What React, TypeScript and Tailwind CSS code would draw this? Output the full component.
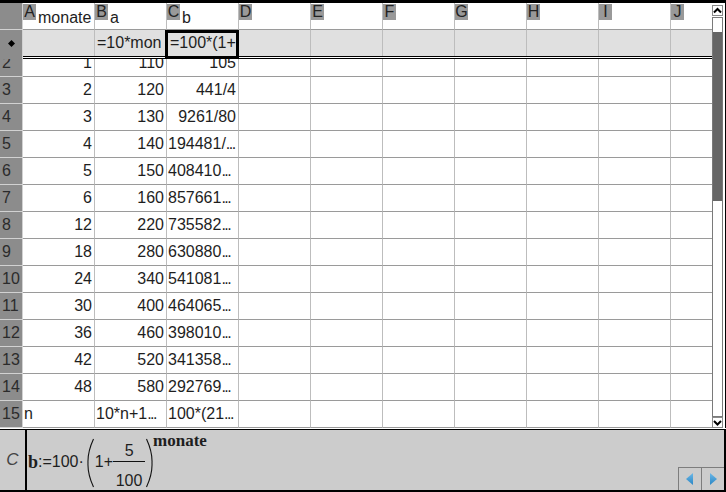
import React from 'react';

type Align = 'right' | 'left';

const ROWS: [string, string, string, string][] = [
  ['2', '1', '110', '105'],
  ['3', '2', '120', '441/4'],
  ['4', '3', '130', '9261/80'],
  ['5', '4', '140', '194481/...'],
  ['6', '5', '150', '408410...'],
  ['7', '6', '160', '857661...'],
  ['8', '12', '220', '735582...'],
  ['9', '18', '280', '630880...'],
  ['10', '24', '340', '541081...'],
  ['11', '30', '400', '464065...'],
  ['12', '36', '460', '398010...'],
  ['13', '42', '520', '341358...'],
  ['14', '48', '580', '292769...'],
  ['15', 'n', '10*n+1...', '100*(21...'],
];

const LETTERS = ['A', 'B', 'C', 'D', 'E', 'F', 'G', 'H', 'I', 'J'];
const NAMES = ['monate', 'a', 'b', '', '', '', '', '', '', ''];

function Val({ s }: { s: string }) {
  if (s.endsWith('...')) {
    return (
      <>
        {s.slice(0, -3)}
        <span className="tracking-[-1.5px]">...</span>
      </>
    );
  }
  return <>{s}</>;
}

function Cell({
  col,
  align = 'right',
  children,
  extra = '',
}: {
  col: number;
  align?: Align;
  children?: React.ReactNode;
  extra?: string;
}) {
  const w = col === 9 ? 'w-[41px]' : 'w-[72px] border-r border-[#bdbdbd]';
  const al = align === 'right' ? 'justify-end pr-[2px]' : 'justify-start pl-[1px]';
  return (
    <div className={`${w} ${al} ${extra} h-full shrink-0 flex items-center overflow-hidden whitespace-nowrap`}>
      {children}
    </div>
  );
}

function DataRow({ r }: { r: [string, string, string, string] }) {
  const [n, a, b, c] = r;
  const alignOf = (s: string): Align => (s.endsWith('...') || s === 'n' ? 'left' : 'right');
  return (
    <div className="h-[27px] flex shrink-0">
      <div className="w-[23px] shrink-0 h-full bg-[#8c8c8c] border-r border-b border-[#d2d2d2] text-[#2b2b2b] flex items-center pl-[2px]">
        {n}
      </div>
      <Cell col={0} align={alignOf(a)} extra="border-b border-b-[#9a9a9a]">
        <Val s={a} />
      </Cell>
      <Cell col={1} align={alignOf(b)} extra="border-b border-b-[#9a9a9a]">
        <Val s={b} />
      </Cell>
      <Cell col={2} align={alignOf(c)} extra="border-b border-b-[#9a9a9a]">
        <Val s={c} />
      </Cell>
      {[3, 4, 5, 6, 7, 8, 9].map((i) => (
        <Cell key={i} col={i} extra="border-b border-b-[#9a9a9a]" />
      ))}
    </div>
  );
}

function Chevron({ down = false }: { down?: boolean }) {
  return (
    <svg width="9" height="9" viewBox="0 0 9 9">
      {down ? (
        <polyline points="1,3 4.5,6.5 8,3" fill="none" stroke="#000" strokeWidth="2" />
      ) : (
        <polyline points="1,6.5 4.5,3 8,6.5" fill="none" stroke="#000" strokeWidth="2" />
      )}
    </svg>
  );
}

function Paren({ right = false }: { right?: boolean }) {
  return (
    <svg width="8" height="50" viewBox="0 0 8 50" className="shrink-0">
      {right ? (
        <path d="M1.5 1 Q7.5 14 7 25 Q7.5 36 1.5 49" fill="none" stroke="#111" strokeWidth="1.1" />
      ) : (
        <path d="M6.5 1 Q0.5 14 1 25 Q0.5 36 6.5 49" fill="none" stroke="#111" strokeWidth="1.1" />
      )}
    </svg>
  );
}

export default function App() {
  return (
    <div className="w-[726px] h-[492px] bg-white flex flex-col overflow-hidden font-['Liberation_Sans',Arial,sans-serif] text-[16px] leading-[16px] text-[#1e1e1e]">
      <div className="h-[3px] bg-black shrink-0" />
      <div className="h-[425px] flex shrink-0">
        {/* grid */}
        <div className="w-[712px] flex flex-col shrink-0">
          {/* header */}
          <div className="h-[27px] flex shrink-0">
            <div className="w-[23px] shrink-0 h-full bg-[#8c8c8c] border-r border-b border-[#d2d2d2]" />
            {LETTERS.map((L, i) => (
              <div
                key={L}
                className={`${i === 9 ? 'w-[41px]' : 'w-[72px] border-r border-[#bdbdbd]'} h-full shrink-0 flex items-start pt-[1px] border-b border-b-[#9a9a9a] overflow-hidden whitespace-nowrap`}
              >
                <span className="bg-[#999999] w-[13px] h-[16px] flex justify-center text-[#222]">{L}</span>
                {NAMES[i] && <span className="ml-[2px] mt-[6px]">{NAMES[i]}</span>}
              </div>
            ))}
          </div>
          {/* formula row */}
          <div className="h-[26px] flex shrink-0">
            <div className="w-[23px] shrink-0 h-full bg-[#8c8c8c] border-r border-[#d2d2d2] flex items-center justify-center">
              <svg width="7" height="7" viewBox="0 0 7 7">
                <polygon points="3.5,0 7,3.5 3.5,7 0,3.5" fill="#000" />
              </svg>
            </div>
            <Cell col={0} extra="bg-[#e0e0e0]" />
            <Cell col={1} align="left" extra="bg-[#e0e0e0] pl-[2px]">
              =10*mon
            </Cell>
            <div className="w-[72px] h-full shrink-0 border-r border-[#bdbdbd] bg-[#e0e0e0] relative z-10">
              <div className="h-full flex items-center pl-[3px] overflow-hidden whitespace-nowrap">=100*(1+</div>
              <div className="absolute -left-[2px] -right-[1px] top-0 -bottom-[3px] border-[3px] border-black" />
            </div>
            {[3, 4, 5, 6, 7, 8, 9].map((i) => (
              <Cell key={i} col={i} extra="bg-[#e0e0e0]" />
            ))}
          </div>
          {/* double separator */}
          <div className="h-[3px] flex shrink-0">
            <div className="w-[23px] shrink-0 bg-[#8c8c8c] border-r border-[#d2d2d2]" />
            <div className="flex-1 flex flex-col">
              <div className="h-[1px] bg-black" />
              <div className="h-[1px] bg-white" />
              <div className="h-[1px] bg-black" />
            </div>
          </div>
          {/* row 2 partially hidden */}
          <div className="h-[18px] overflow-hidden shrink-0">
            <div className="-mt-[9px]">
              <DataRow r={ROWS[0]} />
            </div>
          </div>
          {ROWS.slice(1).map((r) => (
            <DataRow key={r[0]} r={r} />
          ))}
        </div>
        {/* scrollbar */}
        <div className="w-[14px] shrink-0 bg-white border-r border-black flex flex-col pt-[2px]">
          <div className="w-[11px] h-[11px] border border-[#8a8a8a] bg-white flex items-center justify-center">
            <Chevron />
          </div>
          <div className="h-[1px]" />
          <div className="w-[11px] h-[400px] border border-[#7a7a7a] bg-white pt-[14px]">
            <div className="h-[169px] bg-[#666666]" />
          </div>
          <div className="w-[11px] h-[11px] border border-[#8a8a8a] bg-white flex items-center justify-center">
            <Chevron down />
          </div>
        </div>
      </div>
      <div className="h-[1px] bg-white shrink-0" />
      <div className="h-[1px] bg-black shrink-0" />
      {/* bottom panel */}
      <div className="h-[60px] shrink-0 flex bg-[#cccccc] border-r-2 border-black">
        <div className="w-[25px] shrink-0 flex items-center justify-center italic text-[17px] text-[#444]">C</div>
        <div className="w-[2px] shrink-0 bg-black" />
        <div className="flex-1 flex items-start pl-[1px]">
          <span className="mt-[23px] font-['Liberation_Serif',serif] font-bold text-[18px] leading-[18px]">b</span>
          <span className="mt-[24px]">:=100·</span>
          <div className="mt-[8px] ml-[3px]">
            <Paren />
          </div>
          <span className="mt-[24px]">1+</span>
          <div className="mt-[13px] flex flex-col items-center w-[32px]">
            <span className="leading-[16px]">5</span>
            <div className="mt-[2px] h-[1px] w-[32px] bg-[#111]" />
            <span className="mt-[11px] leading-[16px]">100</span>
          </div>
          <div className="mt-[8px]">
            <Paren right />
          </div>
          <span className="mt-[2px] font-['Liberation_Serif',serif] font-bold text-[17px] leading-[18px]">monate</span>
        </div>
        <div className="self-end flex">
          <div className="w-[23px] h-[23px] border-l border-t border-[#7d7d7d] flex items-center justify-center">
            <svg width="8" height="12" viewBox="0 0 8 12">
              <defs>
                <linearGradient id="gl" x1="0" y1="0" x2="0" y2="1">
                  <stop offset="0" stopColor="#6cb8e8" />
                  <stop offset="1" stopColor="#2a86c4" />
                </linearGradient>
              </defs>
              <polygon points="7,0 7,12 0,6" fill="url(#gl)" />
            </svg>
          </div>
          <div className="w-[23px] h-[23px] border-l border-t border-[#7d7d7d] flex items-center justify-center">
            <svg width="8" height="12" viewBox="0 0 8 12">
              <defs>
                <linearGradient id="gr" x1="0" y1="0" x2="0" y2="1">
                  <stop offset="0" stopColor="#6cb8e8" />
                  <stop offset="1" stopColor="#2a86c4" />
                </linearGradient>
              </defs>
              <polygon points="1,0 1,12 8,6" fill="url(#gr)" />
            </svg>
          </div>
        </div>
      </div>
      <div className="h-[2px] bg-black shrink-0" />
    </div>
  );
}
